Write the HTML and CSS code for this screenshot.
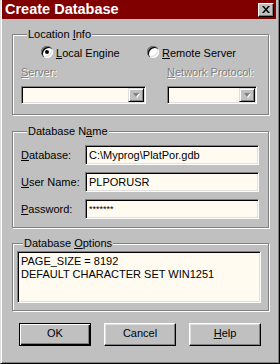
FILE: index.html
```html
<!DOCTYPE html>
<html lang="en">
<head>
    <meta charset="UTF-8">
    <title>Create Database</title>
    <link rel="stylesheet" href="styles.css">
</head>
<body>
    <div class="window">
        <div class="titlebar">
            <span class="title">Create Database</span>
            <span class="close-btn">
                <svg width="8" height="7" viewBox="0 0 8 7">
                    <path d="M0 0h2l2 2.5L6 0h2L5 3.5 8 7H6L4 4.5 2 7H0l3-3.5z" fill="#000"/>
                </svg>
            </span>
        </div>

        <div class="client">
            <div class="group group-location">
                <div class="group-title">Location <u>I</u>nfo</div>
                <div class="radio-row">
                    <div class="radio-item local"><span class="radio checked"></span><span><u>L</u>ocal Engine</span></div>
                    <div class="radio-item"><span class="radio"></span><span><u>R</u>emote Server</span></div>
                </div>
                <div class="combo-row">
                    <div class="combo-field server">
                        <div class="disabled-label"><u>S</u>erver:</div>
                        <div class="combo"><span class="combo-btn"><span class="arrow"></span></span></div>
                    </div>
                    <div class="combo-field protocol">
                        <div class="disabled-label"><u>N</u>etwork Protocol:</div>
                        <div class="combo"><span class="combo-btn"><span class="arrow"></span></span></div>
                    </div>
                </div>
            </div>

            <div class="group group-name">
                <div class="group-title">Database N<u>a</u>me</div>
                <div class="field-row">
                    <span class="field-label"><u>D</u>atabase:</span>
                    <div class="input">C:\Myprog\PlatPor.gdb</div>
                </div>
                <div class="field-row">
                    <span class="field-label"><u>U</u>ser Name:</span>
                    <div class="input">PLPORUSR</div>
                </div>
                <div class="field-row">
                    <span class="field-label"><u>P</u>assword:</span>
                    <div class="input password">*******</div>
                </div>
            </div>

            <div class="group group-options">
                <div class="group-title">Database <u>O</u>ptions</div>
                <div class="textarea">PAGE_SIZE = 8192<br>DEFAULT CHARACTER SET WIN1251</div>
            </div>

            <div class="buttons">
                <div class="btn default">OK</div>
                <div class="btn">Cancel</div>
                <div class="btn"><u>H</u>elp</div>
            </div>
        </div>
    </div>
</body>
</html>
```

FILE: styles.css
```css
* {
    margin: 0;
    padding: 0;
    box-sizing: border-box;
}

body {
    background: #c0c0c0;
    font-family: "Liberation Sans", Arial, sans-serif;
    font-size: 11px;
    line-height: 13px;
    color: #000;
}

u {
    text-decoration: underline;
    text-underline-offset: 1px;
}

.window {
    width: 280px;
    height: 364px;
    background: #c0c0c0;
    border-left: 1px solid #dfdfdf;
    border-right: 1px solid #000;
    border-bottom: 1px solid #000;
    box-shadow: inset 1px 0 0 #fff, inset -1px -1px 0 #808080;
    padding: 0 3px 1px 1px;
}

/* title bar */
.titlebar {
    height: 19px;
    background: #800000;
    display: flex;
    align-items: center;
    justify-content: space-between;
    padding: 0 2px 0 3px;
}

.title {
    color: #fff;
    font-weight: bold;
    font-size: 14.5px;
    line-height: 19px;
}

.close-btn {
    width: 16px;
    height: 14px;
    background: #c0c0c0;
    border-top: 1px solid #fff;
    border-left: 1px solid #fff;
    border-right: 1px solid #000;
    border-bottom: 1px solid #000;
    box-shadow: inset -1px -1px 0 #808080;
    display: flex;
    align-items: center;
    justify-content: center;
    padding: 0 1px 1px 0;
}

/* group boxes */
.group {
    margin: 0 7px 0 10px;
    border: 1px solid #808080;
    box-shadow: inset 1px 1px 0 #fff, 1px 1px 0 #fff;
}

.group-title {
    width: fit-content;
    margin: -7px 0 0 6px;
    padding: 0 1px;
    background: #c0c0c0;
}

.group-location {
    margin-top: 15px;
    padding: 0 0 10px 8px;
}

.group-name {
    margin-top: 16px;
    padding: 0 0 8px 8px;
}

.group-options {
    margin-top: 15px;
    padding: 0 0 7px 4px;
}

/* radios */
.radio-row {
    display: flex;
    margin: 6px 0 0 20px;
}

.radio-item {
    display: flex;
    align-items: flex-start;
    gap: 3px;
}

.radio-item.local {
    width: 106px;
}

.radio {
    width: 12px;
    height: 12px;
    margin-top: -1px;
    border-radius: 50%;
    background: #fff;
    box-shadow: inset 1px 1px 0 #808080, inset 2px 2px 0 #000, inset -1px -1px 0 #fff, inset -2px -2px 0 #dfdfdf;
    display: flex;
    align-items: center;
    justify-content: center;
}

.radio.checked::after {
    content: "";
    width: 4px;
    height: 4px;
    border-radius: 50%;
    background: #000;
}

/* disabled combos */
.combo-row {
    display: flex;
    gap: 21px;
    margin-top: 6px;
}

.disabled-label {
    color: #808080;
    text-shadow: 1px 1px 0 #fff;
    margin-bottom: 7px;
}

.server .combo {
    width: 125px;
}

.protocol .combo {
    width: 90px;
}

.combo {
    height: 18px;
    background: #fffbf0;
    border-top: 1px solid #808080;
    border-left: 1px solid #808080;
    border-right: 1px solid #fff;
    border-bottom: 1px solid #fff;
    box-shadow: inset 1px 1px 0 #000, inset -1px -1px 0 #dfdfdf;
    display: flex;
    justify-content: flex-end;
    padding: 1px;
}

.combo-btn {
    width: 16px;
    height: 14px;
    background: #c0c0c0;
    border-top: 1px solid #dfdfdf;
    border-left: 1px solid #dfdfdf;
    border-right: 1px solid #000;
    border-bottom: 1px solid #000;
    box-shadow: inset 1px 1px 0 #fff, inset -1px -1px 0 #808080;
    display: flex;
    align-items: center;
    justify-content: center;
}

.arrow {
    width: 0;
    height: 0;
    border-left: 3.5px solid transparent;
    border-right: 3.5px solid transparent;
    border-top: 4px solid #808080;
    filter: drop-shadow(1px 1px 0 #fff);
}

/* text fields */
.field-row {
    display: flex;
    align-items: center;
    height: 20px;
    margin-top: 7px;
}

.field-row:first-of-type {
    margin-top: 6px;
}

.field-label {
    width: 64px;
}

.input {
    width: 174px;
    height: 20px;
    line-height: 16px;
    padding: 0 3px;
    background: #fffbf0;
    border-top: 1px solid #808080;
    border-left: 1px solid #808080;
    border-right: 1px solid #fff;
    border-bottom: 1px solid #fff;
    box-shadow: inset 1px 1px 0 #000, inset -1px -1px 0 #dfdfdf;
    padding-top: 1px;
    padding-left: 3px;
}

.input.password {
    font-size: 9px;
    letter-spacing: 0;
}

.textarea {
    width: 244px;
    height: 52px;
    margin-top: 1px;
    padding: 3px 3px;
    background: #fffbf0;
    border-top: 1px solid #808080;
    border-left: 1px solid #808080;
    border-right: 1px solid #fff;
    border-bottom: 1px solid #fff;
    box-shadow: inset 1px 1px 0 #000, inset -1px -1px 0 #dfdfdf;
}

/* buttons */
.buttons {
    display: flex;
    gap: 13px;
    margin: 12px 0 0 17px;
}

.btn {
    width: 72px;
    height: 23px;
    line-height: 19px;
    text-align: center;
    background: #c0c0c0;
    border-top: 1px solid #fff;
    border-left: 1px solid #fff;
    border-right: 1px solid #000;
    border-bottom: 1px solid #000;
    box-shadow: inset -1px -1px 0 #808080, inset 1px 1px 0 #dfdfdf;
}

.btn.default {
    border: 1px solid #000;
    box-shadow: inset 1px 1px 0 #fff, inset -1px -1px 0 #000, inset -2px -2px 0 #808080;
}
```
